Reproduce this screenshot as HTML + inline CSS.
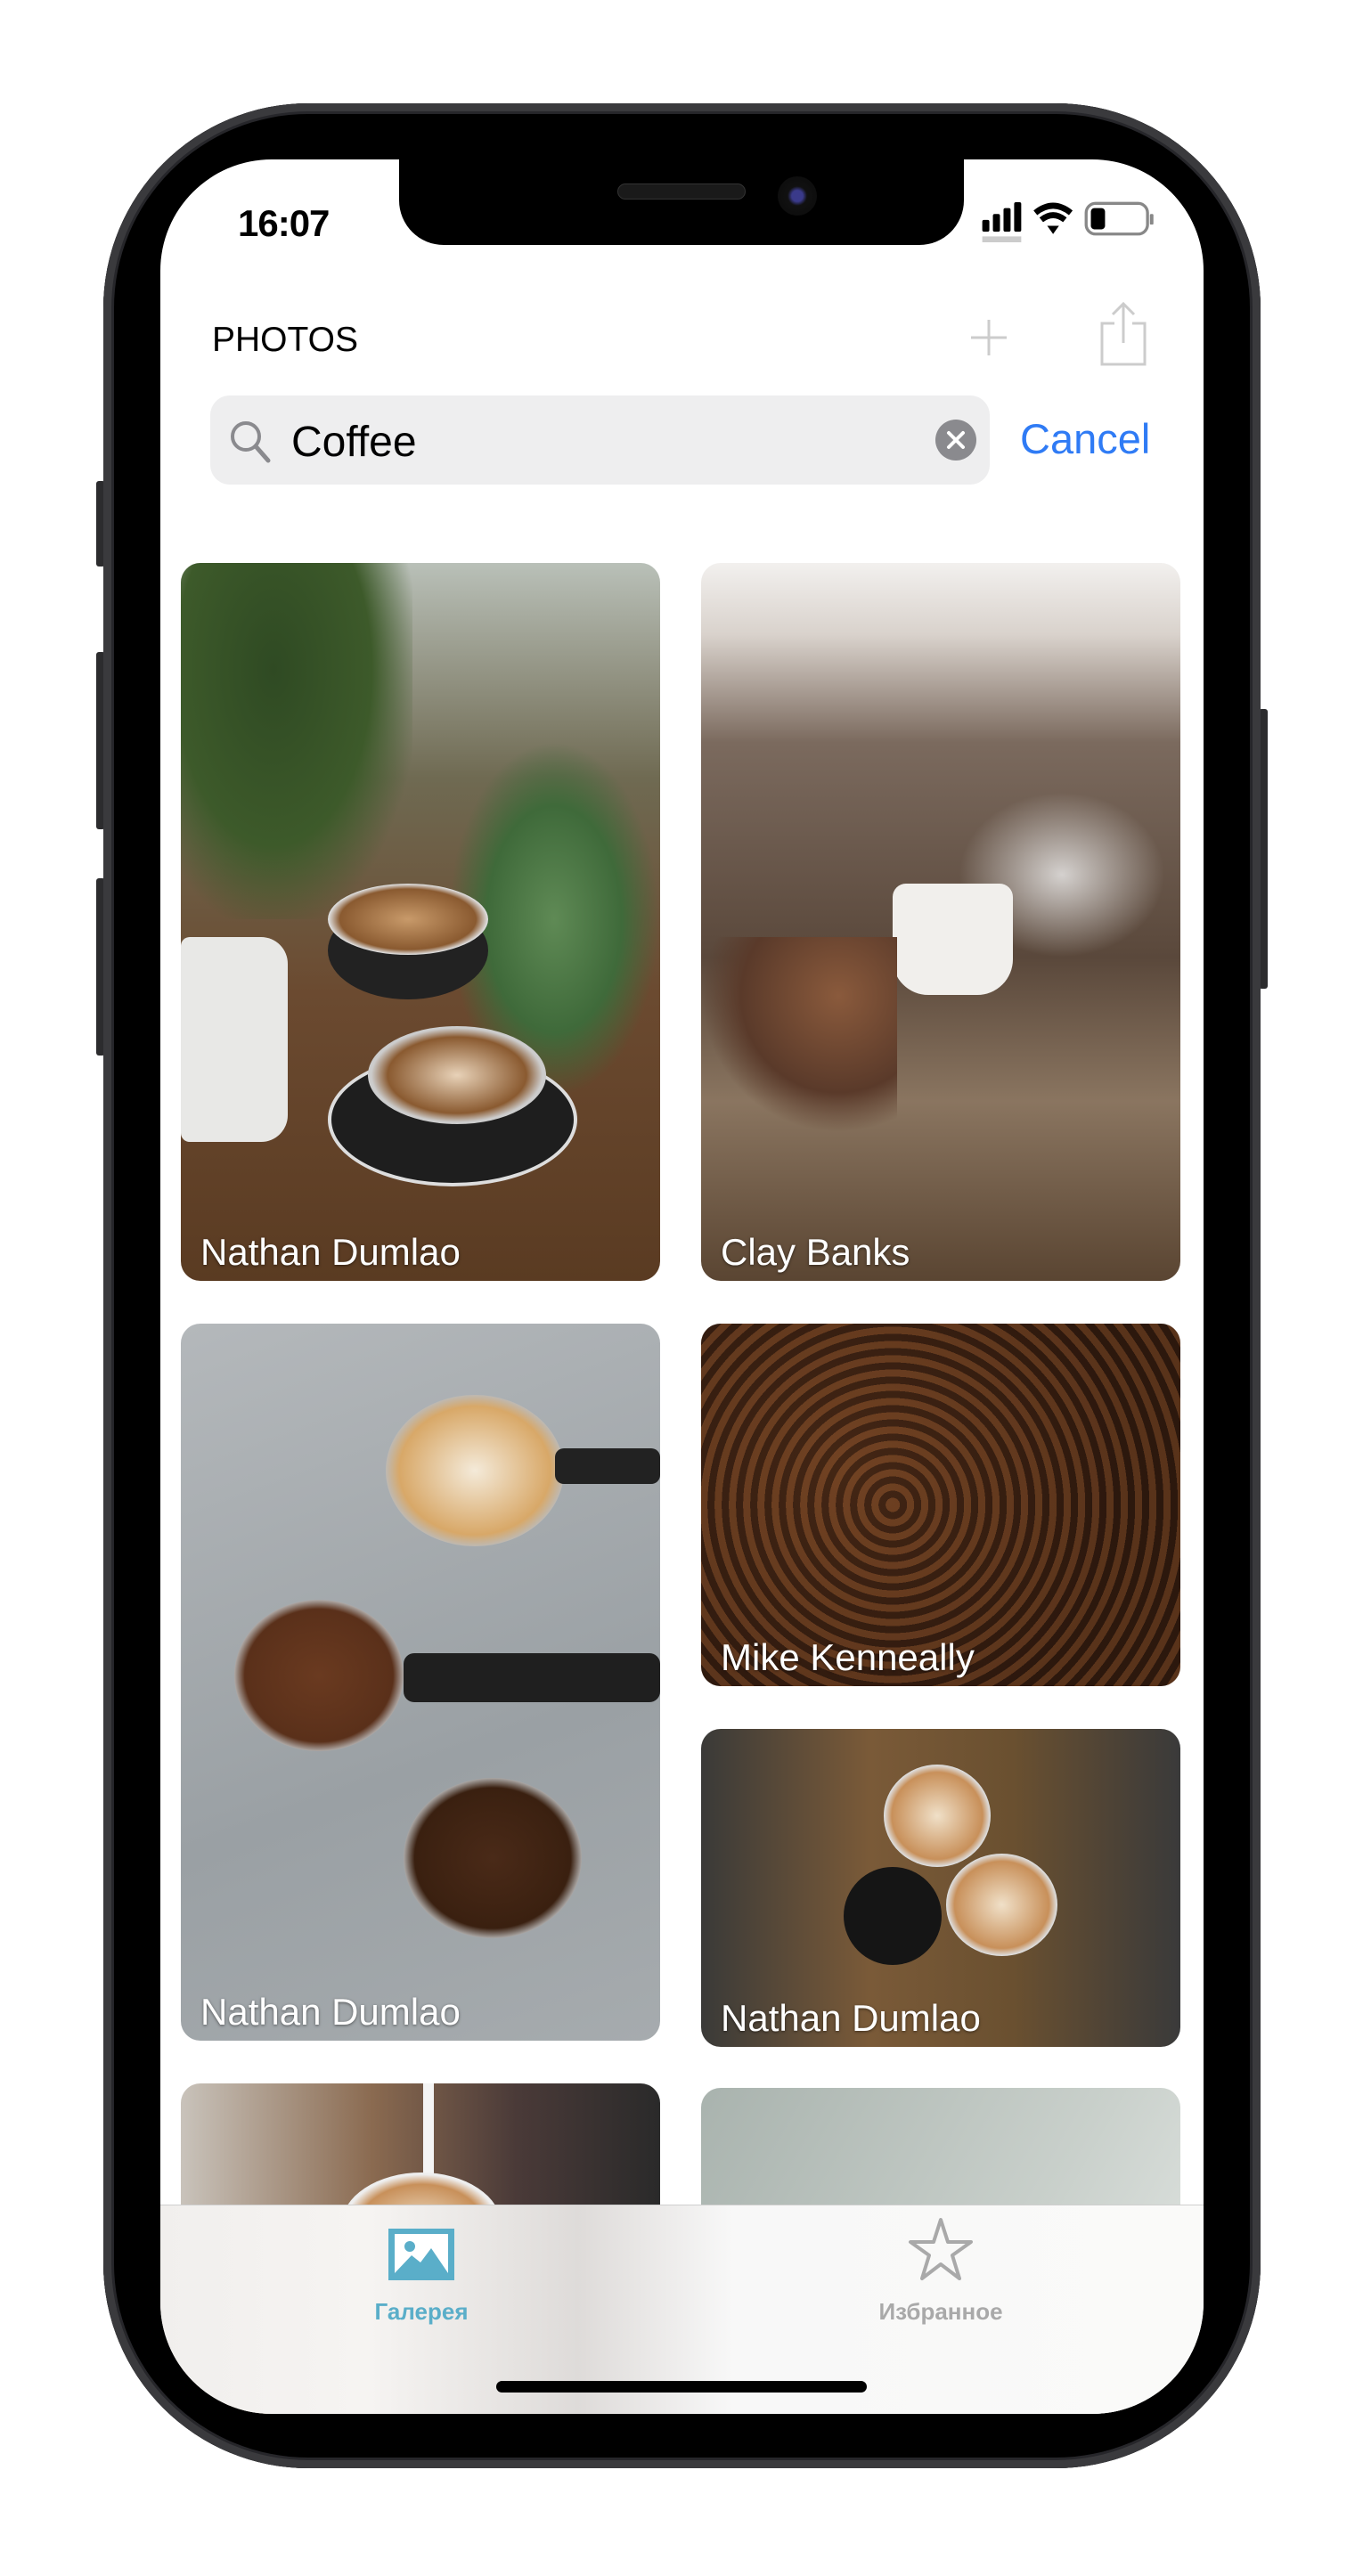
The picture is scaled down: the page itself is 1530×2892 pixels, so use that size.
<!DOCTYPE html>
<html><head><meta charset="utf-8"><style>
*{margin:0;padding:0;box-sizing:border-box}
body{width:1530px;height:2892px;background:#fff;position:relative;overflow:hidden;font-family:"Liberation Sans","DejaVu Sans",sans-serif}
.abs{position:absolute}
.phone{left:116px;top:116px;width:1299px;height:2655px;border-radius:230px;background:#000;box-shadow:inset 0 0 0 9px #3a3a3d,inset 0 0 0 12px #26262a}
.screen{left:180px;top:179px;width:1171px;height:2531px;border-radius:125px;background:#fff;overflow:hidden}
.btn{background:#2c2c2e;border-radius:3px}
.notch{left:448px;top:170px;width:634px;height:105px;background:#000;border-radius:0 0 50px 50px}
.card{position:absolute;border-radius:22px;overflow:hidden}
.lbl{position:absolute;left:22px;bottom:8px;color:#fff;font-size:42px;text-shadow:0 1px 3px rgba(0,0,0,.5)}
.cup{position:absolute;border-radius:50%}
</style></head><body>
<div class="abs btn" style="left:108px;top:540px;width:10px;height:96px"></div>
<div class="abs btn" style="left:108px;top:732px;width:10px;height:199px"></div>
<div class="abs btn" style="left:108px;top:986px;width:10px;height:199px"></div>
<div class="abs btn" style="left:1413px;top:796px;width:10px;height:314px"></div>
<div class="abs phone"></div>
<div class="abs screen">
  <div class="abs" style="left:87px;top:48px;font-size:42px;font-weight:bold;color:#000;letter-spacing:-1px">16:07</div>
  <svg class="abs" style="left:922px;top:44px" width="200" height="53" viewBox="0 0 150 40">
    <rect x="0" y="18" width="6" height="10" rx="1.5" fill="#000"/><rect x="9" y="13" width="6" height="15" rx="1.5" fill="#000"/><rect x="18" y="8" width="6" height="20" rx="1.5" fill="#000"/><rect x="27" y="3" width="6" height="25" rx="1.5" fill="#000"/>
    <rect x="0" y="32" width="33" height="5" fill="#ccc"/>
    <path d="M45 12 Q60 0 75 12" stroke="#000" stroke-width="5" fill="none"/><path d="M50 18 Q60 10 70 18" stroke="#000" stroke-width="5" fill="none"/><path d="M55 23 L60 30 L65 23 Z" fill="#000"/>
    <rect x="88" y="4" width="52" height="26" rx="8" fill="none" stroke="#888" stroke-width="2.5"/><rect x="92" y="8" width="12" height="18" rx="3" fill="#000"/><rect x="142" y="13" width="3" height="9" rx="1" fill="#888"/>
  </svg>
  <div class="abs" style="left:58px;top:181px;font-size:39px;color:#000">PHOTOS</div>
  <svg class="abs" style="left:908px;top:178px" width="44" height="44"><path d="M22 2V42M2 22H42" stroke="#ccc" stroke-width="3"/></svg>
  <svg class="abs" style="left:1053px;top:158px" width="56" height="76"><path d="M28 48V4M16 16L28 4L40 16M18 26H4V72H52V26H38" stroke="#ccc" stroke-width="3" fill="none"/></svg>
  <div class="abs" style="left:56px;top:265px;width:875px;height:100px;border-radius:22px;background:#eeeeef"></div>
  <svg class="abs" style="left:76px;top:291px" width="50" height="54"><circle cx="20" cy="20" r="15" stroke="#8a8a8e" stroke-width="4" fill="none"/><path d="M31 31L45 47" stroke="#8a8a8e" stroke-width="5" stroke-linecap="round"/></svg>
  <div class="abs" style="left:147px;top:290px;font-size:48px;color:#000">Coffee</div>
  <svg class="abs" style="left:869px;top:291px" width="48" height="48"><circle cx="24" cy="24" r="23" fill="#8a8a8e"/><path d="M16 16L32 32M32 16L16 32" stroke="#fff" stroke-width="4" stroke-linecap="round"/></svg>
  <div class="abs" style="left:965px;top:286px;font-size:47px;color:#2f7bf5">Cancel</div>

  <div class="card" style="left:23px;top:453px;width:538px;height:806px;background:linear-gradient(180deg,#b9c0b8 0%,#6f6a52 30%,#6b4a30 60%,#5a3b22 100%)">
    <div class="abs" style="left:0;top:0;width:260px;height:400px;background:radial-gradient(ellipse at 40% 30%,#2f4a23,#3d5a2a 50%,transparent 75%)"></div>
    <div class="abs" style="left:300px;top:200px;width:238px;height:400px;background:radial-gradient(ellipse,#5f8a55,#3f6a3a 45%,transparent 70%)"></div>
    <div class="abs" style="left:0;top:420px;width:120px;height:230px;background:#e8e8e6;border-radius:10px 30px 30px 10px"></div>
    <div class="cup" style="left:165px;top:380px;width:180px;height:110px;background:#222;"></div>
    <div class="cup" style="left:165px;top:360px;width:180px;height:80px;background:radial-gradient(#c89a6a,#8a5a30 60%,#ddd 70%)"></div>
    <div class="cup" style="left:165px;top:550px;width:280px;height:150px;background:#1e1e1e;border:4px solid #ddd"></div>
    <div class="cup" style="left:210px;top:520px;width:200px;height:110px;background:radial-gradient(#e8d2b8,#8a5a30 55%,#ccc 68%)"></div>
    <div class="lbl">Nathan Dumlao</div>
  </div>
  <div class="card" style="left:607px;top:453px;width:538px;height:806px;background:linear-gradient(180deg,#f2f0ee 0%,#d9d2cc 10%,#7b6a5e 25%,#5a483b 55%,#8a7560 75%,#5a4532 100%)">
    <div class="abs" style="left:280px;top:250px;width:250px;height:200px;background:radial-gradient(ellipse,rgba(240,240,240,.8),transparent 65%)"></div>
    <div class="cup" style="left:215px;top:360px;width:135px;height:125px;border-radius:15px 15px 40px 40px;background:#f1efec"></div>
    <div class="abs" style="left:0;top:420px;width:220px;height:220px;background:radial-gradient(ellipse at 70% 30%,#8a5a3c,#5a3a2a 50%,transparent 70%)"></div>
    <div class="lbl">Clay Banks</div>
  </div>
  <div class="card" style="left:23px;top:1307px;width:538px;height:805px;background:linear-gradient(160deg,#b4b8bb,#9aa0a4 60%,#a6abae)">
    <div class="cup" style="left:230px;top:80px;width:200px;height:170px;background:radial-gradient(#f4ead9,#d8a868 60%,#bbb 72%)"></div>
    <div class="abs" style="left:420px;top:140px;width:118px;height:40px;background:#222;border-radius:10px"></div>
    <div class="cup" style="left:60px;top:310px;width:190px;height:170px;background:radial-gradient(#6a3a20,#5a301a 62%,#bbb 72%)"></div>
    <div class="abs" style="left:250px;top:370px;width:288px;height:55px;background:#1f1f1f;border-radius:12px"></div>
    <div class="cup" style="left:250px;top:510px;width:200px;height:180px;background:radial-gradient(#4a2a18,#3a2010 62%,#bbb 72%)"></div>
    <div class="lbl">Nathan Dumlao</div>
  </div>
  <div class="card" style="left:607px;top:1307px;width:538px;height:407px;background:radial-gradient(circle at 30% 40%,#6a3e22,#3a2012 70%),#3a2214">
    <div class="abs" style="left:0;top:0;width:100%;height:100%;background:repeating-radial-gradient(circle at 40% 50%,rgba(120,70,35,.5) 0 8px,rgba(30,15,8,.5) 8px 16px)"></div>
    <div class="lbl">Mike Kenneally</div>
  </div>
  <div class="card" style="left:607px;top:1762px;width:538px;height:357px;background:linear-gradient(90deg,#3a3a38,#7a5a38 35%,#6a5030 65%,#3a3a3a)">
    <div class="cup" style="left:205px;top:40px;width:120px;height:115px;background:radial-gradient(#f0e0c8,#c8905a 60%,#ddd 70%)"></div>
    <div class="cup" style="left:275px;top:140px;width:125px;height:115px;background:radial-gradient(#f0e0c8,#c8905a 60%,#ddd 70%)"></div>
    <div class="cup" style="left:160px;top:155px;width:110px;height:110px;background:#151515"></div>
    <div class="lbl">Nathan Dumlao</div>
  </div>
  <div class="card" style="left:23px;top:2160px;width:538px;height:400px;background:linear-gradient(90deg,#c9c3bb,#8a6a50 40%,#4a3a38 70%,#2a2a2a)">
    <div class="abs" style="left:272px;top:0;width:12px;height:120px;background:#f4f4f4"></div>
    <div class="cup" style="left:180px;top:100px;width:180px;height:120px;background:radial-gradient(#f0e0c8,#c8905a 55%,#eee 68%)"></div>
  </div>
  <div class="card" style="left:607px;top:2165px;width:538px;height:400px;background:linear-gradient(120deg,#a9b3ae,#c9d0cb 60%,#e4e8e5)"></div>

  <div class="abs" style="left:0;top:2296px;width:1171px;height:240px;background:linear-gradient(90deg,#f1efed 0%,#f6f4f2 20%,#dedbd9 40%,#f8f8f8 55%,#fafaf9 100%);border-top:1px solid #cfcfcf"></div>
  <svg class="abs" style="left:254px;top:2321px" width="78" height="62" viewBox="0 0 78 62">
    <rect x="2" y="2" width="74" height="58" fill="#5aaec9"/><rect x="9" y="8" width="60" height="44" fill="#fff"/>
    <circle cx="26" cy="22" r="6" fill="#5aaec9"/><path d="M9 52L28 32L38 40L50 24L69 52Z" fill="#5aaec9"/>
  </svg>
  <div class="abs" style="left:226px;top:2401px;width:134px;text-align:center;font-size:26px;font-weight:bold;color:#5aaec9">Галерея</div>
  <svg class="abs" style="left:839px;top:2309px" width="74" height="76" viewBox="0 0 74 76"><path d="M37 4L45 29H71L50 44L58 70L37 54L16 70L24 44L3 29H29Z" fill="none" stroke="#a9a9a9" stroke-width="4" stroke-linejoin="round"/></svg>
  <div class="abs" style="left:770px;top:2401px;width:212px;text-align:center;font-size:26px;font-weight:bold;color:#a9a9a9">Избранное</div>
  <div class="abs" style="left:377px;top:2494px;width:416px;height:13px;border-radius:7px;background:#000"></div>
</div>
<div class="abs notch"></div>
<div class="abs" style="left:693px;top:206px;width:144px;height:18px;border-radius:9px;background:#1a1a1a;border:1px solid #333"></div>
<div class="abs" style="left:873px;top:198px;width:44px;height:44px;border-radius:50%;background:radial-gradient(circle,#3a3a8a 0 20%,#111 35%,#0a0a0a)"></div>
</body></html>
